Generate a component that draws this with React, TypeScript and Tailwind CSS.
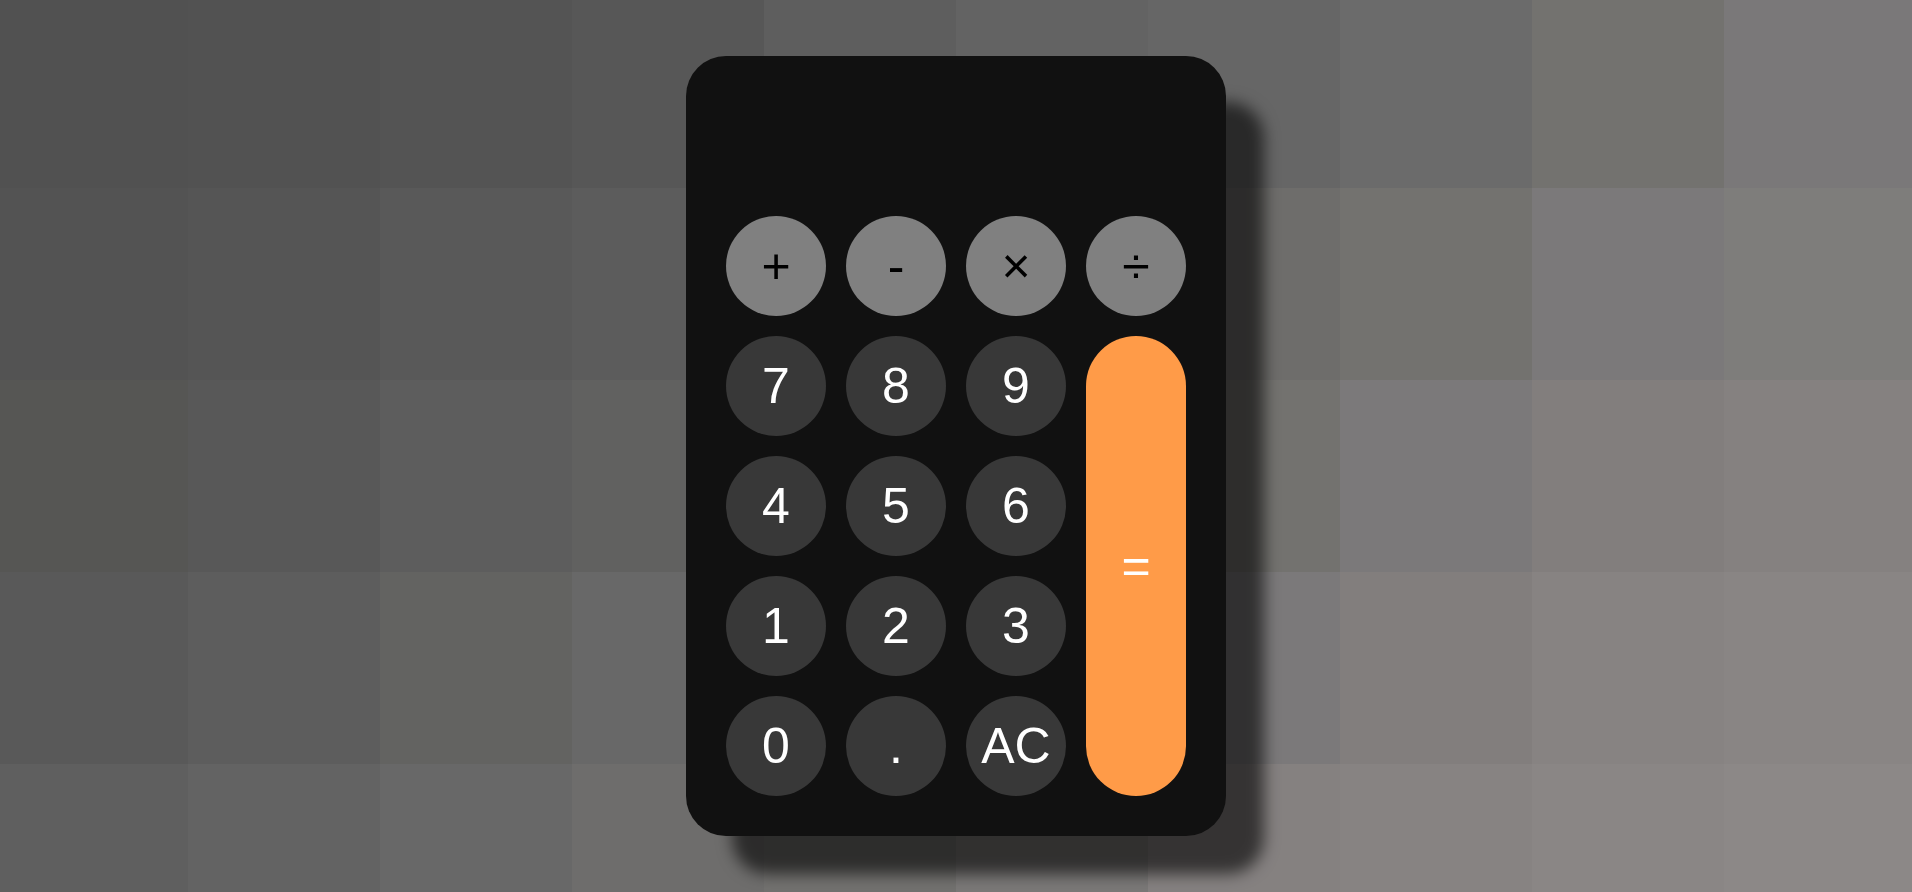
import React from 'react';

// blurry pixel backdrop, 10 x 5 cells of 192px
const BACKDROP: string[] = [
  'bg-[#515151]', 'bg-[#525252]', 'bg-[#545454]', 'bg-[#575757]', 'bg-[#5e5e5e]', 'bg-[#636363]', 'bg-[#666666]', 'bg-[#6b6b6b]', 'bg-[#73726f]', 'bg-[#7a7879]',
  'bg-[#535353]', 'bg-[#555555]', 'bg-[#595959]', 'bg-[#5c5c5c]', 'bg-[#616161]', 'bg-[#676767]', 'bg-[#6e6d6b]', 'bg-[#73726f]', 'bg-[#7b797a]', 'bg-[#7e7d7b]',
  'bg-[#565654]', 'bg-[#585858]', 'bg-[#5d5d5d]', 'bg-[#616160]', 'bg-[#666666]', 'bg-[#6c6b6a]', 'bg-[#73726f]', 'bg-[#7b797a]', 'bg-[#827e7d]', 'bg-[#858180]',
  'bg-[#595959]', 'bg-[#5d5d5d]', 'bg-[#636361]', 'bg-[#686868]', 'bg-[#6c6b6a]', 'bg-[#757372]', 'bg-[#7b797a]', 'bg-[#827e7d]', 'bg-[#878382]', 'bg-[#898584]',
  'bg-[#5f5f5f]', 'bg-[#636363]', 'bg-[#686868]', 'bg-[#6e6d6c]', 'bg-[#72716f]', 'bg-[#7a7877]', 'bg-[#858180]', 'bg-[#878382]', 'bg-[#8a8685]', 'bg-[#8c8887]',
];

type Key = { label: string; kind: 'op' | 'num' };

const OPS: Key[] = ['+', '-', '×', '÷'].map((label) => ({ label, kind: 'op' }));
const NUMS: string[] = ['7', '8', '9', '4', '5', '6', '1', '2', '3', '0', '.', 'AC'];

function CalcButton({ label, kind }: Key) {
  const tone =
    kind === 'op' ? 'bg-[#808080] text-black' : 'bg-[#383838] text-white';
  return (
    <button
      className={`w-[100px] h-[100px] rounded-full flex items-center justify-center text-[50px] leading-none ${tone}`}
    >
      {label}
    </button>
  );
}

export default function App() {
  return (
    <div
      className="relative w-full h-[892px] overflow-hidden flex items-center justify-center"
      style={{ fontFamily: '"Liberation Sans", Arial, sans-serif' }}
    >
      {/* backdrop */}
      <div className="absolute left-[-4px] top-[-4px] grid grid-cols-[repeat(10,192px)] grid-rows-[repeat(5,192px)]">
        {BACKDROP.map((c, i) => (
          <div key={i} className={c} />
        ))}
      </div>

      {/* calculator body */}
      <div className="relative w-[540px] h-[780px] p-[40px] rounded-[40px] bg-[#111111] shadow-[42px_42px_15px_-4px_rgba(0,0,0,0.6)] flex flex-col gap-[20px]">
        <div className="h-[100px]" />
        <div className="grid grid-cols-[repeat(4,100px)] grid-rows-[repeat(5,100px)] gap-[20px]">
          {OPS.map((k) => (
            <CalcButton key={k.label} {...k} />
          ))}
          {NUMS.slice(0, 3).map((n) => (
            <CalcButton key={n} label={n} kind="num" />
          ))}
          <button className="row-span-4 w-[100px] rounded-full bg-[#ff9b48] text-white text-[50px] leading-none flex items-center justify-center">
            =
          </button>
          {NUMS.slice(3).map((n) => (
            <CalcButton key={n} label={n} kind="num" />
          ))}
        </div>
      </div>
    </div>
  );
}
